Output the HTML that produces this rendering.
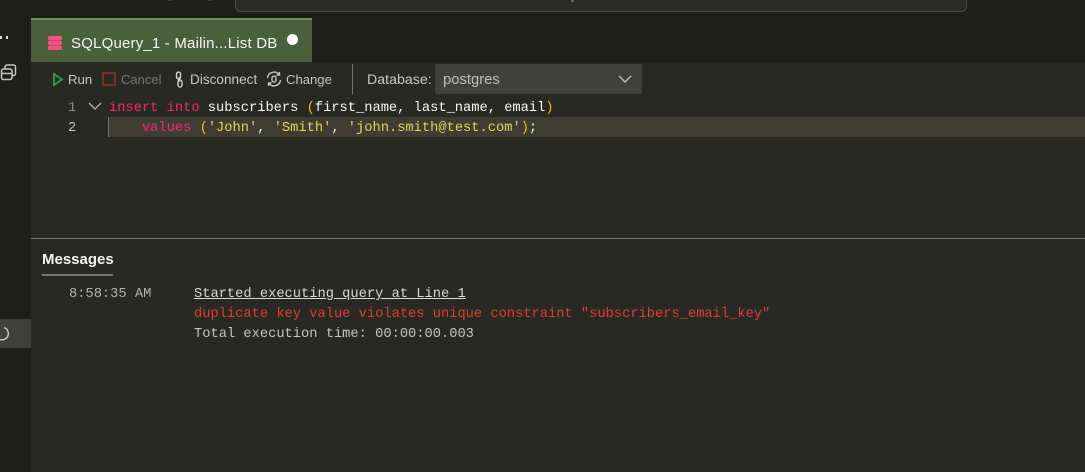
<!DOCTYPE html>
<html><head><meta charset="utf-8"><style>
html,body{margin:0;padding:0;width:1085px;height:472px;overflow:hidden;background:#1e1e1c}
*{box-sizing:border-box}
.a{position:absolute;white-space:pre}
.ui{font-family:"Liberation Sans",sans-serif;font-size:14px;line-height:18px;color:#c9c9c3}
.m{font-family:"Liberation Mono",monospace;font-size:13.73px;line-height:20px;color:#f8f8f4}
.k{color:#f92672}.y{color:#e6d45a}.b{color:#f2b92f}
</style></head><body>
<div class="a" style="left:0;top:0;width:1085px;height:472px;background:#1e1e1c"></div>
<div class="a" style="left:235px;top:-20px;width:732px;height:32px;background:#2a2a28;border:1px solid #4d4d4a;border-radius:6px"></div>
<div class="a" style="left:168px;top:0;width:4px;height:1px;background:#444"></div>
<div class="a" style="left:208px;top:0;width:4px;height:1px;background:#444"></div>
<div class="a" style="left:571px;top:0;width:3px;height:2px;background:#666"></div>
<div class="a" style="left:31px;top:62px;width:1054px;height:410px;background:#282923"></div>
<div class="a" style="left:31px;top:18px;width:281px;height:44px;background:#4a5f3c;border-top:2px solid #6c9355"></div>
<svg class="a" style="left:47px;top:35px" width="16" height="16" viewBox="0 0 16 16"><rect x="1" y="1" width="14" height="4.4" rx="1.8" fill="#f4517f"/><rect x="1" y="5.8" width="14" height="4.4" rx="1.8" fill="#f4517f"/><rect x="1" y="10.6" width="14" height="4.4" rx="1.8" fill="#f4517f"/></svg>
<div class="a ui" style="left:71px;top:35px;font-size:15px;letter-spacing:.19px;color:#f4f6f2">SQLQuery_1 - Mailin...List DB</div>
<div class="a" style="left:287px;top:34px;width:11px;height:11px;border-radius:50%;background:#fff"></div>
<div class="a" style="left:0;top:36px;width:2px;height:3px;background:#ddd"></div>
<div class="a" style="left:6px;top:36px;width:2px;height:3px;background:#ddd"></div>
<svg class="a" style="left:0;top:64px" width="17" height="17" viewBox="0 0 17 17" fill="none" stroke="#c5c5c0" stroke-width="1.5"><rect x="5" y="1" width="10.5" height="10.5" rx="2"/><rect x="1.5" y="5" width="10.5" height="10.5" rx="2" fill="#1e1e1c"/><path d="M1.5 9.5h10"/></svg>
<svg class="a" style="left:52px;top:72px" width="12" height="15" viewBox="0 0 12 15" fill="none"><path d="M2 2l8 5.5L2 13z" stroke="#2f9e4f" stroke-width="1.8"/></svg>
<div class="a ui" style="left:68px;top:71px;font-size:13.2px">Run</div>
<div class="a" style="left:102px;top:72px;width:14px;height:14px;border:2px solid #7a2c26"></div>
<div class="a ui" style="left:121px;top:71px;font-size:13px;color:#777872">Cancel</div>
<svg class="a" style="left:173px;top:71px" width="12" height="18" viewBox="0 0 12 18" fill="none" stroke="#d5d5d0" stroke-width="1.4"><rect x="3.5" y="1" width="4" height="7" rx="2"/><rect x="5" y="9" width="4" height="7" rx="2"/><path d="M6 6v5"/></svg>
<div class="a ui" style="left:190px;top:71px;font-size:13.6px">Disconnect</div>
<svg class="a" style="left:266px;top:71px" width="16" height="16" viewBox="0 0 16 16" fill="none" stroke="#c5c5c0" stroke-width="1.4"><path d="M1.5 7A6.5 6.5 0 0 1 13 3.5M14.5 9A6.5 6.5 0 0 1 3 12.5"/><path d="M13.5 1v3h-3M2.5 15v-3h3"/><rect x="6" y="5" width="4" height="6" rx="2"/></svg>
<div class="a ui" style="left:286px;top:71px;font-size:13.1px">Change</div>
<div class="a" style="left:352px;top:64px;width:1px;height:30px;background:#77776f"></div>
<div class="a ui" style="left:367px;top:71px;font-size:14.2px">Database:</div>
<div class="a" style="left:435px;top:64px;width:207px;height:30px;background:#40413a;border-radius:2px"></div>
<div class="a ui" style="left:443px;top:71px;font-size:14.8px;color:#c2c2bc">postgres</div>
<svg class="a" style="left:618px;top:74px" width="14" height="10" viewBox="0 0 14 10" fill="none" stroke="#c8c8c2" stroke-width="1.3"><path d="M1 2l6 6 6-6"/></svg>
<div class="a" style="left:108px;top:117px;width:977px;height:20px;background:#3e3d32;border-left:1px solid #77776f"></div>
<div class="a m" style="left:68px;top:99px;color:#90908a">1</div>
<div class="a m" style="left:68px;top:119px;color:#c2c2bf">2</div>
<svg class="a" style="left:88px;top:101px" width="14" height="10" viewBox="0 0 14 10" fill="none" stroke="#b5b5b0" stroke-width="1.3"><path d="M1 2l6 6 6-6"/></svg>
<div class="a m" style="left:109px;top:99px"><span class="k">insert</span> <span class="k">into</span> subscribers <span class="b">(</span>first_name, last_name, email<span class="b">)</span></div>
<div class="a m" style="left:109px;top:119px">    <span class="k">values</span> <span class="b">(</span><span class="y">'John'</span>, <span class="y">'Smith'</span>, <span class="y">'john.smith@test.com'</span><span class="b">)</span>;</div>
<div class="a" style="left:31px;top:238px;width:1054px;height:1px;background:#77776f"></div>
<div class="a ui" style="left:42px;top:251px;font-weight:bold;font-size:15px;color:#f4f6f6">Messages</div>
<div class="a" style="left:42px;top:274px;width:71px;height:2px;background:#77776f"></div>
<div class="a m" style="left:69px;top:285px;color:#b4b4ae">8:58:35 AM</div>
<div class="a m" style="left:194px;top:285px;color:#d8d8d3;text-decoration:underline">Started executing query at Line 1</div>
<div class="a m" style="left:194px;top:305px;color:#e03c3c">duplicate key value violates unique constraint "subscribers_email_key"</div>
<div class="a m" style="left:194px;top:325px;color:#c4c4bf">Total execution time: 00:00:00.003</div>
<div class="a" style="left:0;top:319px;width:31px;height:29px;background:#40413a"></div>
<svg class="a" style="left:0;top:325px" width="12" height="18" viewBox="0 0 12 18" fill="none" stroke="#cfcfca" stroke-width="1.4"><path d="M4 2.5A6.3 6.3 0 1 1 0 14.5"/></svg>
</body></html>
